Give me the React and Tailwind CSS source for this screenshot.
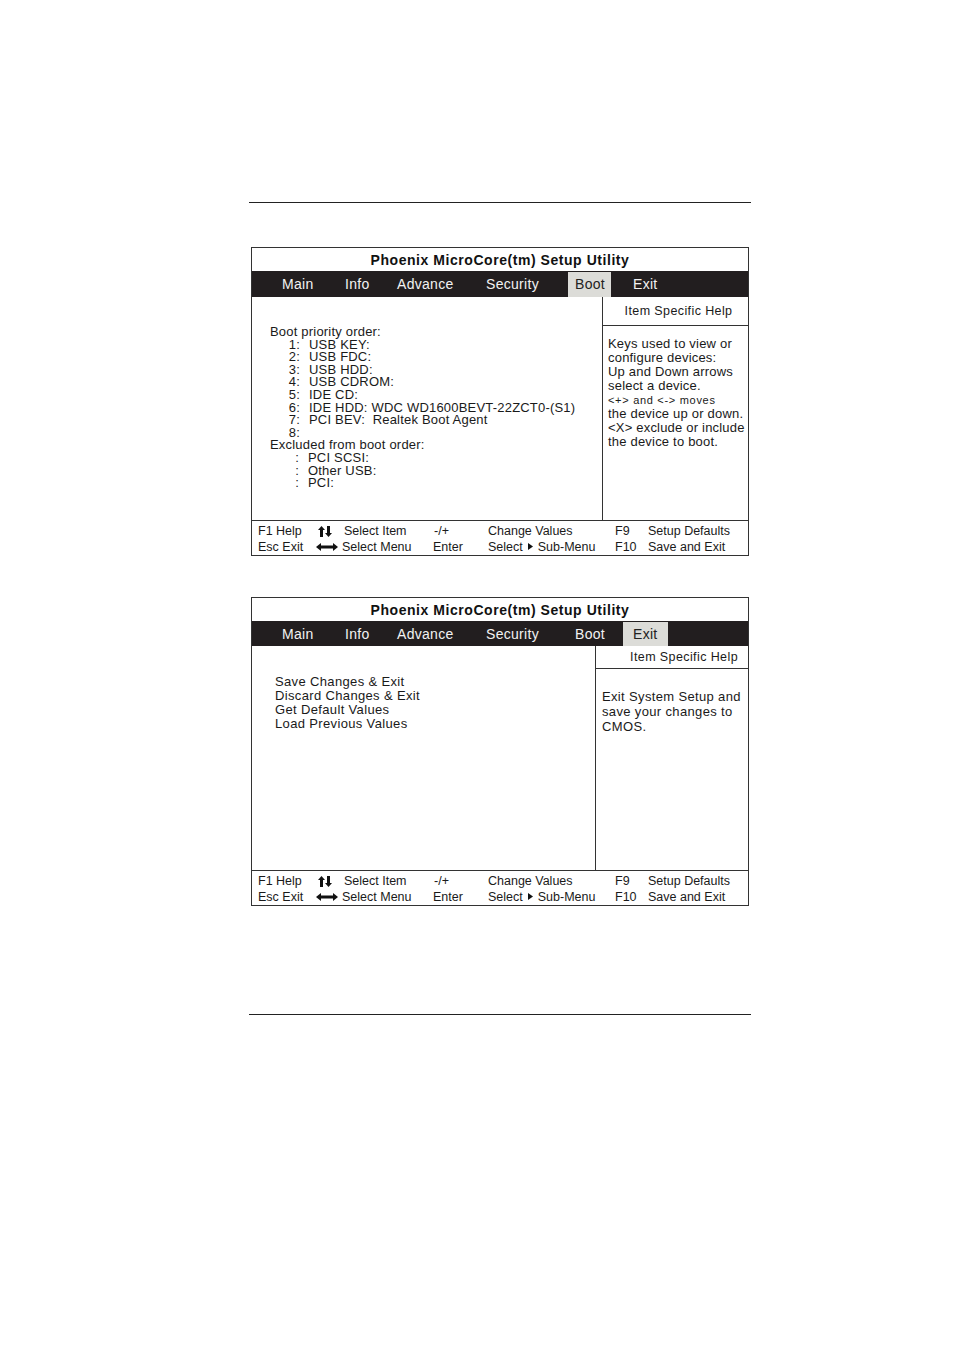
import React from 'react';

const FONT = { fontFamily: '"Liberation Sans", Arial, sans-serif' };

const UpDown = () => (
  <svg width="14" height="11" viewBox="0 0 14 11" className="inline-block">
    <path d="M3.5 0 L7 4 L5 4 L5 11 L2 11 L2 4 L0 4 Z" fill="#111" />
    <path d="M10.5 11 L14 7 L12 7 L12 0 L9 0 L9 7 L7 7 Z" fill="#111" />
  </svg>
);

const LeftRight = () => (
  <svg width="22" height="8" viewBox="0 0 22 8" className="inline-block">
    <path d="M0 4 L5 0 L5 2.5 L17 2.5 L17 0 L22 4 L17 8 L17 5.5 L5 5.5 L5 8 Z" fill="#111" />
  </svg>
);

const Tri = () => (
  <svg width="5" height="7" viewBox="0 0 5 7" className="inline-block mx-[5px] mb-[1px]">
    <path d="M0 0 L5 3.5 L0 7 Z" fill="#111" />
  </svg>
);

// menu bar, widths give each label its column
const MenuBar = ({ items }) => (
  <div className="flex h-full bg-[#221e1f] text-[#f2f2f2] text-[14px] tracking-[0.3px] pt-[1px]">
    <div className="w-[30px]" />
    {items.map(it => (
      <div
        key={it.label}
        className={
          it.active
            ? 'flex items-center bg-[#dcdcd8] text-[#222] ' + it.cls
            : 'flex items-center ' + it.cls
        }
      >
        {it.label}
      </div>
    ))}
  </div>
);

const Footer = () => (
  <div className="h-[35px] border-t border-[#333] grid grid-cols-[60px_26px_90px_54px_127px_33px_1fr] pl-[6px] pt-[3px] text-[12.5px] leading-[14.5px] text-[#1a1a1a]">
    <div>F1 Help</div>
    <div className="flex items-center"><UpDown /></div>
    <div>Select Item</div>
    <div>-/+</div>
    <div>Change Values</div>
    <div>F9</div>
    <div>Setup Defaults</div>
    <div>Esc Exit</div>
    <div className="flex items-center -ml-[2px]"><LeftRight /></div>
    <div className="-ml-[2px]">Select Menu</div>
    <div className="-ml-[1px]">Enter</div>
    <div className="flex items-center">Select<Tri />Sub-Menu</div>
    <div>F10</div>
    <div>Save and Exit</div>
  </div>
);

const Title = () => (
  <div className="h-[23px] flex items-center justify-center pt-[2px] font-bold text-[14px] tracking-[0.55px] text-[#111]">
    Phoenix MicroCore(tm) Setup Utility
  </div>
);

const bootItems = [
  { label: 'Main', cls: 'w-[63px]' },
  { label: 'Info', cls: 'w-[52px]' },
  { label: 'Advance', cls: 'w-[89px]' },
  { label: 'Security', cls: 'w-[82px]' },
  { label: 'Boot', active: true, cls: 'w-[43px] pl-[7px]' },
  { label: 'Exit', cls: 'ml-[22px]' },
];

const exitItems = [
  { label: 'Main', cls: 'w-[63px]' },
  { label: 'Info', cls: 'w-[52px]' },
  { label: 'Advance', cls: 'w-[89px]' },
  { label: 'Security', cls: 'w-[89px]' },
  { label: 'Boot', cls: 'w-[48px]' },
  { label: 'Exit', active: true, cls: 'w-[45px] pl-[10px]' },
];

const bootOrder = [
  ['1:', 'USB KEY:'],
  ['2:', 'USB FDC:'],
  ['3:', 'USB HDD:'],
  ['4:', 'USB CDROM:'],
  ['5:', 'IDE CD:'],
  ['6:', 'IDE HDD: WDC WD1600BEVT-22ZCT0-(S1)'],
  ['7:', 'PCI BEV:  Realtek Boot Agent'],
  ['8:', ''],
];

const excluded = ['PCI SCSI:', 'Other USB:', 'PCI:'];

const BootScreen = () => (
  <div className="border border-[#333] bg-white">
    <Title />
    <div className="h-[26px]"><MenuBar items={bootItems} /></div>
    <div className="flex h-[223px]">
      <div className="w-[351px] border-r border-[#333] pl-[18px] pt-[29px] text-[13px] leading-[12.6px] tracking-[0.2px] text-[#1a1a1a] whitespace-pre">
        <div>Boot priority order:</div>
        {bootOrder.map(([n, t]) => (
          <div key={n} className="flex">
            <span className="w-[30px] text-right">{n}</span>
            <span className="ml-[9px]">{t}</span>
          </div>
        ))}
        <div>Excluded from boot order:</div>
        {excluded.map(t => (
          <div key={t} className="flex">
            <span className="w-[29px] text-right">:</span>
            <span className="ml-[9px]">{t}</span>
          </div>
        ))}
      </div>
      <div className="flex-1 flex flex-col">
        <div className="h-[29px] border-b border-[#333] flex items-center justify-center pl-[6px] pt-[1px] text-[12.5px] tracking-[0.4px] text-[#1a1a1a]">
          Item Specific Help
        </div>
        <div className="pl-[5px] pt-[11px] text-[13px] leading-[14px] tracking-[0.2px] text-[#1a1a1a]">
          <div>Keys used to view or</div>
          <div>configure devices:</div>
          <div>Up and Down arrows</div>
          <div>select a device.</div>
          <div className="text-[11px] tracking-[0.7px]">&lt;+&gt; and &lt;-&gt; moves</div>
          <div>the device up or down.</div>
          <div>&lt;X&gt; exclude or include</div>
          <div>the device to boot.</div>
        </div>
      </div>
    </div>
    <Footer />
  </div>
);

const ExitScreen = () => (
  <div className="border border-[#333] bg-white">
    <Title />
    <div className="h-[25px]"><MenuBar items={exitItems} /></div>
    <div className="flex h-[224px]">
      <div className="w-[344px] border-r border-[#333] pl-[23px] pt-[29px] text-[13px] leading-[14px] tracking-[0.35px] text-[#1a1a1a]">
        <div>Save Changes &amp; Exit</div>
        <div>Discard Changes &amp; Exit</div>
        <div>Get Default Values</div>
        <div>Load Previous Values</div>
      </div>
      <div className="flex-1 flex flex-col">
        <div className="h-[23px] border-b border-[#333] flex items-center justify-end pr-[10px] pt-[1px] text-[12.5px] tracking-[0.4px] text-[#1a1a1a]">
          Item Specific Help
        </div>
        <div className="pl-[6px] pt-[20px] text-[13px] leading-[15px] tracking-[0.35px] text-[#1a1a1a]">
          <div>Exit System Setup and</div>
          <div>save your changes to</div>
          <div>CMOS.</div>
        </div>
      </div>
    </div>
    <Footer />
  </div>
);

export default function App() {
  return (
    <div className="w-[954px] h-[1350px] bg-white pt-[202px]" style={FONT}>
      <div className="ml-[249px] w-[502px]">
        <div className="h-px bg-[#222]" />
        <div className="mx-[2px] mt-[44px]">
          <BootScreen />
        </div>
        <div className="mx-[2px] mt-[41px]">
          <ExitScreen />
        </div>
        <div className="h-px bg-[#222] mt-[108px]" />
      </div>
    </div>
  );
}
